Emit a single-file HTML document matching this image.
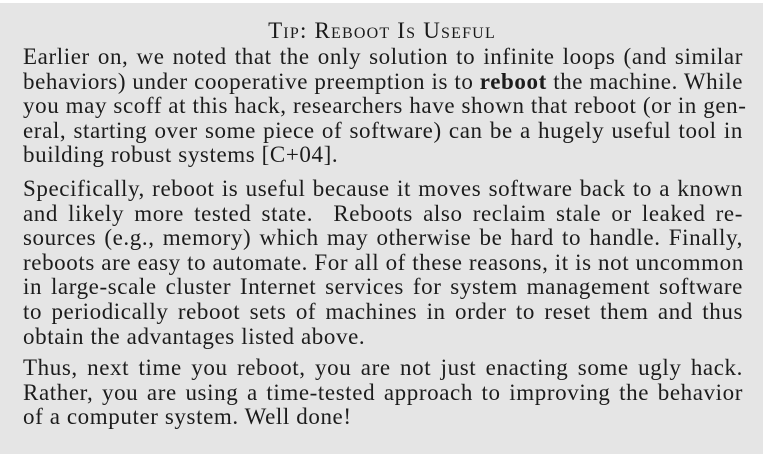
<!DOCTYPE html>
<html><head><meta charset="utf-8"><style>
html,body{margin:0;padding:0;background:#fff;}
body{width:764px;height:455px;position:relative;overflow:hidden;}
.box{position:absolute;left:0;top:3px;width:763px;height:451px;background:#e5e5e5;}
.t{position:absolute;left:0;width:764px;top:19px;text-align:center;font-family:"Liberation Serif",serif;font-size:23px;letter-spacing:1.2px;color:#1a1a1a;font-variant:small-caps;line-height:24px;}
.p{position:absolute;left:23px;width:720px;font-family:"Liberation Serif",serif;font-size:23px;letter-spacing:0.6px;line-height:24.6px;color:#1c1c1c;}
.l{text-align:justify;text-align-last:justify;white-space:nowrap;height:24.6px;}
.l.e{text-align-last:left;}
b{font-weight:bold;}
</style></head><body>
<div class="box"></div>
<div class="t">Tip: Reboot Is Useful</div>
<div class="p" style="top:45px">
<div class="l">Earlier on, we noted that the only solution to infinite loops (and similar</div>
<div class="l">behaviors) under cooperative preemption is to <b>reboot</b> the machine. While</div>
<div class="l">you may scoff at this hack, researchers have shown that reboot (or in gen-</div>
<div class="l">eral, starting over some piece of software) can be a hugely useful tool in</div>
<div class="l e">building robust systems [C+04].</div>
</div>
<div class="p" style="top:177px">
<div class="l">Specifically, reboot is useful because it moves software back to a known</div>
<div class="l">and likely more tested state. &nbsp;Reboots also reclaim stale or leaked re-</div>
<div class="l">sources (e.g., memory) which may otherwise be hard to handle. Finally,</div>
<div class="l">reboots are easy to automate. For all of these reasons, it is not uncommon</div>
<div class="l">in large-scale cluster Internet services for system management software</div>
<div class="l">to periodically reboot sets of machines in order to reset them and thus</div>
<div class="l e">obtain the advantages listed above.</div>
</div>
<div class="p" style="top:356px">
<div class="l">Thus, next time you reboot, you are not just enacting some ugly hack.</div>
<div class="l">Rather, you are using a time-tested approach to improving the behavior</div>
<div class="l e">of a computer system. Well done!</div>
</div>
</body></html>
